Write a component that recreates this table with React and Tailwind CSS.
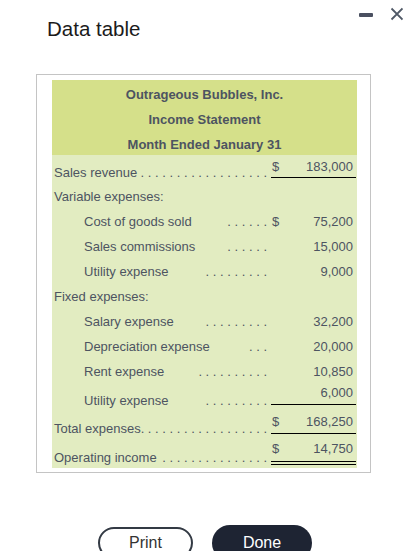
import React from "react";

const rows = [
  { label: "Sales revenue", dots: 18, dollar: true, amount: "183,000", h: "h-[28px]", lpt: "pt-[10px]", amt: "pt-[4px] pb-[3px] border-b border-black" },
  { label: "Variable expenses:", dots: 0, h: "h-[25px]", lpt: "pt-[6px]", amt: "pt-[6px]" },
  { label: "Cost of goods sold", indent: true, dots: 6, dollar: true, amount: "75,200", h: "h-[25px]", lpt: "pt-[6px]", amt: "pt-[6px]" },
  { label: "Sales commissions", indent: true, dots: 6, amount: "15,000", h: "h-[25px]", lpt: "pt-[6px]", amt: "pt-[6px]" },
  { label: "Utility expense", indent: true, dots: 9, amount: "9,000", h: "h-[25px]", lpt: "pt-[6px]", amt: "pt-[6px]" },
  { label: "Fixed expenses:", dots: 0, h: "h-[25px]", lpt: "pt-[6px]", amt: "pt-[6px]" },
  { label: "Salary expense", indent: true, dots: 9, amount: "32,200", h: "h-[25px]", lpt: "pt-[6px]", amt: "pt-[6px]" },
  { label: "Depreciation expense", indent: true, dots: 3, amount: "20,000", h: "h-[25px]", lpt: "pt-[6px]", amt: "pt-[6px]" },
  { label: "Rent expense", indent: true, dots: 10, amount: "10,850", h: "h-[25px]", lpt: "pt-[6px]", amt: "pt-[6px]" },
  { label: "Utility expense", indent: true, dots: 9, amount: "6,000", h: "h-[28px]", lpt: "pt-[10px]", amt: "pt-[2px] pb-[4px] border-b border-black" },
  { label: "Total expenses.", dots: 17, dollar: true, amount: "168,250", h: "h-[28px]", lpt: "pt-[10px]", amt: "pt-[3px] pb-[4px] border-b border-black" },
  { label: "Operating income", dots: 15, dollar: true, amount: "14,750", h: "h-[29px]", lpt: "pt-[11px]", amt: "pt-[2px] pb-[5px] border-b-4 border-double border-black" },
];

function Row({ r }) {
  const dots = r.dots ? Array(r.dots).fill(".").join(" ") : "";
  return (
    <div className={`flex ${r.h}`}>
      <div className={`flex w-[219px] justify-between gap-[4px] whitespace-nowrap pr-[4px] ${r.indent ? "pl-[32px]" : "pl-[2px]"} ${r.lpt}`}>
        <span className="shrink-0">{r.label}</span>
        <span className="flex min-w-0 justify-end overflow-hidden whitespace-pre">{dots}</span>
      </div>
      <div className={`flex w-[85px] self-start justify-between pl-[1px] pr-[3px] ${r.amt}`}>
        <span>{r.dollar ? "$" : ""}</span>
        <span>{r.amount}</span>
      </div>
    </div>
  );
}

export default function App() {
  return (
    <div className="relative h-[551px] w-[403px] overflow-hidden bg-white font-['Liberation_Sans',Arial,sans-serif]">
      {/* window controls */}
      <div className="absolute left-[359px] top-[13px] h-[4px] w-[14px] rounded-[1px] bg-[#4a5060]" />
      <svg className="absolute left-[390px] top-[7px]" width="14" height="14" viewBox="0 0 14 14">
        <path d="M1.5 1.5 L12.5 12.5 M12.5 1.5 L1.5 12.5" stroke="#4f5866" strokeWidth="1.8" />
      </svg>

      <h1 className="pl-[47px] pt-[17px] text-[20.5px] leading-[24px] text-[#1b1b1b]">Data table</h1>

      <div className="ml-[36px] mt-[33px] w-[335px] border border-[#c4c4c4] pb-[4px] pl-[15px] pr-[13px] pt-[5px]">
        <div className="w-[305px] text-[13px] leading-[15px] text-[#4d5461]">
          <div className="h-[75px] bg-[#d5e08a] pt-[2px] text-center font-bold leading-[25px]">
            <div>Outrageous Bubbles, Inc.</div>
            <div>Income Statement</div>
            <div>Month Ended January 31</div>
          </div>
          <div className="bg-[#e2ecc1]">
            {rows.map((r, i) => (
              <Row key={i} r={r} />
            ))}
          </div>
        </div>
      </div>

      <div className="mt-[52px] flex items-start gap-[19px] pl-[98px]">
        <button className="mt-[2px] h-[32px] w-[95px] rounded-full border-2 border-[#333a44] text-[16px] text-[#333]">
          Print
        </button>
        <button className="h-[36px] w-[100px] rounded-full bg-[#1e2433] text-[16px] text-white">
          Done
        </button>
      </div>
    </div>
  );
}
